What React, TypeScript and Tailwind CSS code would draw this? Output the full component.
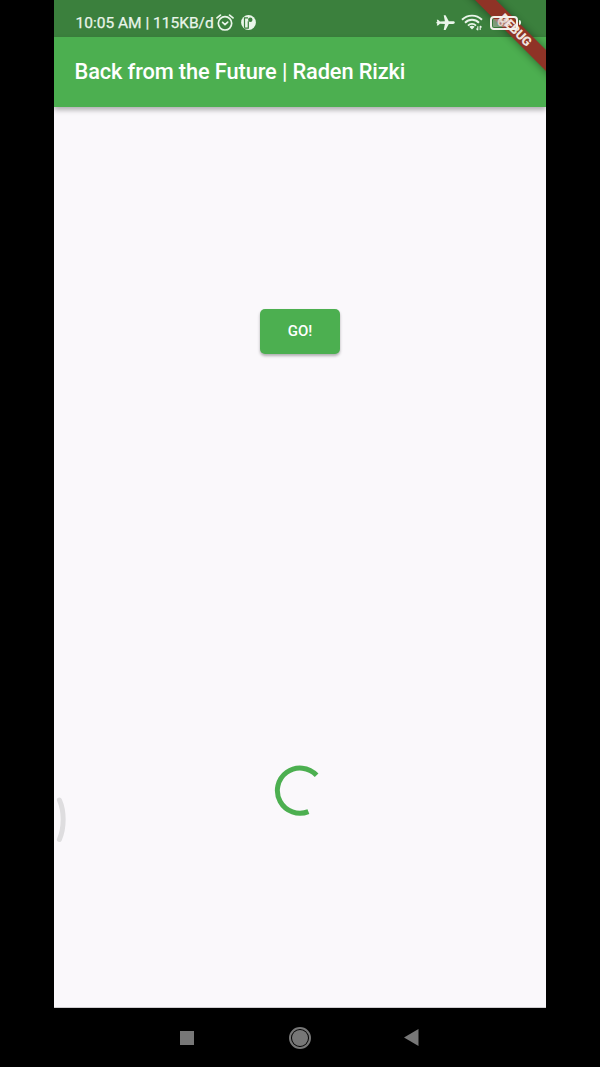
import React from "react";

function StatusBar() {
  return (
    <div className="flex h-[37px] shrink-0 items-center bg-[#3b803d] pl-[21.5px] pt-[8px] text-[#eaf5ea]">
      <span className="w-[139.5px] whitespace-nowrap pt-px text-[15.5px] leading-[20px] [-webkit-text-stroke:0.25px_#eaf5ea]">10:05 AM | 115KB/d</span>
      <svg className="ml-[1px] h-[18px] w-[18px] shrink-0" viewBox="0 0 18 18" fill="none" stroke="currentColor" strokeWidth="1.7" strokeLinecap="round">
        <circle cx="9" cy="9.3" r="6.7" />
        <path d="M1 3.9 4.4 1.1M17 3.9 13.6 1.1" />
        <path d="M6.6 8.4 9 10.6 11.7 8.1" />
      </svg>
      <svg className="ml-[7px] h-[16px] w-[16px] shrink-0" viewBox="0 0 16 16">
        <circle cx="7.5" cy="7.5" r="7.4" fill="currentColor" />
        <path d="M3.5 12.7V2.8H7M7.3 6.2v6.9H3.5" fill="none" stroke="#3b803d" strokeWidth="1.2" />
        <circle cx="9.3" cy="4.7" r="2.2" fill="#3b803d" />
      </svg>
      <svg className="ml-[179px] h-[16px] w-[19px] shrink-0" viewBox="0 0 19 16" fill="currentColor">
        <path d="M18.8 7.6c0-.8-.8-1.3-1.7-1.3h-4.3L9.6.2H7.7l1.2 6.1-4.9.2L2 4.7H.8l.5 2.1-.9.2v1.2l.9.2-.5 2.1H2l2-1.8 4.9.2L7.7 15h1.9l3.2-6.1h4.3c.9 0 1.7-.5 1.7-1.3Z" />
      </svg>
      <svg className="ml-[6px] h-[17px] w-[22px] shrink-0" viewBox="0 0 22 17" fill="none" stroke="currentColor" strokeWidth="1.9">
        <path d="M1 5.7C6.7.2 15.3.2 21 5.7" />
        <path d="M4 8.7c4-3.9 10-3.9 14 0" />
        <path d="M7 11.6c2.3-2.3 5.7-2.3 8 0" />
        <path d="m8.3 12.7 2.7 2.9 2.7-2.9c-1.5-1.3-3.9-1.3-5.4 0Z" fill="currentColor" stroke="none" />
        <path d="M16.8 12.2v4M15.4 14.7l1.4 1.5M19.2 16v-4M20.6 13.4 19.2 12" strokeWidth="1.1" />
      </svg>
      <div className="relative z-30 ml-[6.5px] flex h-[14px] w-[28px] shrink-0 items-center justify-center rounded-[4px] border-2 border-[#f3f1ec]">
        <div className="flex h-[8px] w-[22px] items-center justify-center rounded-[1px] bg-gradient-to-r from-[#c9c5bb]/50 from-60% to-transparent to-60% text-[11px] font-bold leading-none text-[#f3e4df]/80">62</div>
      </div>
      <div className="relative z-30 ml-px h-[5px] w-[2px] shrink-0 rounded-r bg-current" />
    </div>
  );
}

function DebugBanner() {
  return (
    <svg className="absolute right-0 top-0 z-20 h-[90px] w-[92px]" viewBox="-10 0 92 90">
      <defs>
        <filter id="banner-shadow" x="-30%" y="-30%" width="160%" height="160%">
          <feGaussianBlur stdDeviation="4" />
        </filter>
      </defs>
      <path d="M1-10 92 81V61L21-10Z" fill="#000" opacity=".45" filter="url(#banner-shadow)" />
      <path d="M1-10 92 81V60L22-10Z" fill="#8f3326" />
      <text x="51.5" y="34.4" transform="rotate(45 51.5 30)" textAnchor="middle" textLength="40" fill="#f0e3df" fontSize="12.8" fontWeight="900" fontFamily="Roboto, sans-serif">DEBUG</text>
    </svg>
  );
}

export default function App() {
  return (
    <div className="flex h-[1067px] w-[600px] justify-center overflow-hidden bg-black font-['Roboto',sans-serif]">
      <div className="relative flex w-[492px] flex-col overflow-hidden">
        <StatusBar />
        <header className="z-10 flex h-[70px] shrink-0 items-center bg-[#4caf50] pl-[20.5px] shadow-[0_3px_5px_rgba(0,0,0,0.3)]">
          <h1 className="whitespace-nowrap text-[21.8px] font-medium tracking-[-0.12px] text-white">Back from the Future | Raden Rizki</h1>
        </header>
        <main className="flex h-[901px] shrink-0 flex-col items-center border-b border-[#cfcdd0] bg-[#faf8fb] pt-[202px]">
          <button className="h-[45px] w-[80px] shrink-0 rounded-[5px] bg-[#4caf50] text-[15px] font-medium text-white shadow-[0_2px_3px_rgba(0,0,0,0.3)]">GO!</button>
          <svg className="mt-[411px] h-[52px] w-[52px] shrink-0" viewBox="0 0 52 52" fill="none" stroke="#4caf50" strokeWidth="5">
            <path d="M42.6 10.3A22.6 22.6 0 1 0 34.4 46.6" />
          </svg>
          <svg className="-mt-[21px] h-[48px] w-[14px] shrink-0 self-start" viewBox="0 0 14 48" fill="none" stroke="#dedddf" strokeWidth="5" strokeLinecap="round">
            <path d="M5.4 4C10.4 15 10.4 32 5.4 43.5" />
          </svg>
        </main>
        <nav className="flex h-[59px] shrink-0 items-center bg-black">
          <div className="ml-[126px] h-[14px] w-[14px] bg-[#777]" />
          <div className="ml-[95px] flex h-[22px] w-[22px] items-center justify-center rounded-full border-2 border-[#777]">
            <div className="h-[16px] w-[16px] rounded-full bg-[#777]" />
          </div>
          <svg className="ml-[93px] h-[17px] w-[15px]" viewBox="0 0 15 17">
            <path d="M0 8.5 14.5 0v17Z" fill="#777" />
          </svg>
        </nav>
        <DebugBanner />
      </div>
    </div>
  );
}
